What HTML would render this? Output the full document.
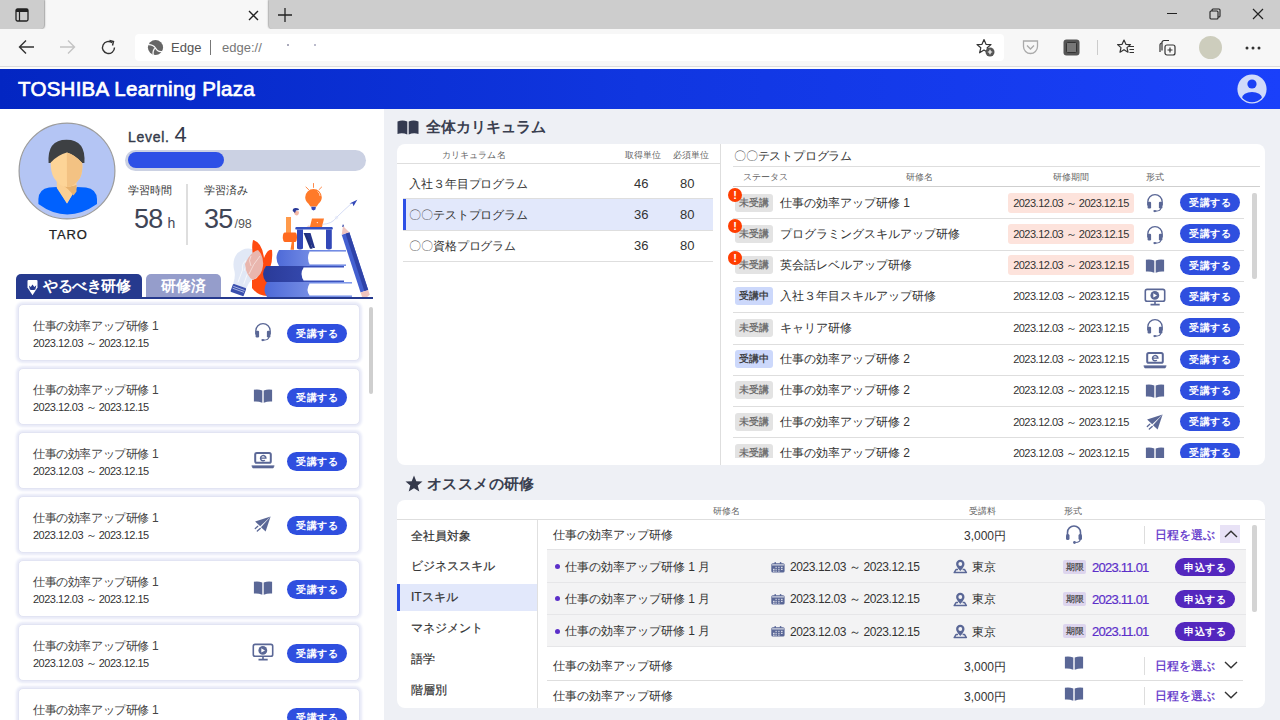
<!DOCTYPE html>
<html><head><meta charset="utf-8">
<style>
*{box-sizing:border-box;margin:0;padding:0}
html,body{width:1280px;height:720px;overflow:hidden;background:#eef0f5;font-family:"Liberation Sans",sans-serif;color:#333}
.a{position:absolute}
svg{display:block}
/* chrome */
#tabbar{left:0;top:0;width:1280px;height:30px;background:#f7f7f7}
#tabL{left:0;top:0;width:44px;height:29px;background:#cdcdcd;border-radius:0 0 4px 0;box-shadow:0.5px 0 1.5px rgba(0,0,0,0.35)}
#tabR{left:269px;top:0;width:1011px;height:29px;background:#cdcdcd;border-radius:0 0 0 4px;box-shadow:-0.5px 0 1.5px rgba(0,0,0,0.3)}
#toolbar{left:0;top:29px;width:1280px;height:38px;background:#f7f7f7;border-bottom:1px solid #dcdcdc}
#addr{left:135px;top:34px;width:869px;height:27px;background:#fff;border-radius:4px}
#hdrwhite{left:0;top:67px;width:1280px;height:2px;background:#fbfbfb}
#header{left:0;top:69px;width:1280px;height:40px;background:linear-gradient(90deg,#0326c2 0%,#1036e0 50%,#1a40fa 100%)}
#brand{left:18px;top:77px;font-size:20.5px;font-weight:normal;-webkit-text-stroke:0.7px #fff;color:#fff;letter-spacing:0.27px;white-space:nowrap}
#hline{left:0;top:108px;width:1280px;height:2px;background:#fff}
/* left */
#left{left:0;top:109px;width:384px;height:611px;background:#fff}

.lbl{font-size:11px;color:#333;white-space:nowrap}
.card{position:absolute;left:18px;width:342px;height:57px;background:#fff;border:1px solid #e2e4f3;border-radius:5px;box-shadow:0 0 2.5px 1.5px #e8eaf8}
.card .t{position:absolute;left:14px;top:13px;font-size:12px;color:#444;white-space:nowrap;letter-spacing:-0.4px}
.card .d{position:absolute;left:14px;top:31px;font-size:11px;color:#333;white-space:nowrap;letter-spacing:-0.5px}
.card .ic{position:absolute;left:231.6px;top:16.5px}
.btn{position:absolute;width:60px;height:19px;border-radius:10px;background:#2f4fdf;color:#fff;font-size:10px;font-weight:bold;text-align:center;line-height:20px;white-space:nowrap;letter-spacing:0.5px}
.card .btn{left:268px;top:18.7px}

.sec{font-size:15px;font-weight:bold;color:#3a3f50;letter-spacing:0px;white-space:nowrap}
.panel{position:absolute;background:#fff;border-radius:8px}
.th{position:absolute;font-size:9px;color:#666;white-space:nowrap;letter-spacing:0.1px}
.hl{position:absolute;height:1px;background:#dedede}
.ct{position:absolute;font-size:12px;color:#333;white-space:nowrap;letter-spacing:-0.1px}
.num{position:absolute;font-size:13px;color:#333;white-space:nowrap}
.st{position:absolute;width:38px;height:18px;border-radius:3px;font-size:9.8px;line-height:18.5px;text-align:center;white-space:nowrap;-webkit-text-stroke:0.25px currentColor}
.st.n{background:#e3e3e3;color:#666}
.st.y{background:#ccd8fb;color:#333}
.ex{position:absolute;width:14px;height:14px;border-radius:50%;background:#ff3d00;color:#fff;font-size:11px;font-weight:bold;text-align:center;line-height:14px}
.tn{position:absolute;font-size:12px;color:#333;white-space:nowrap;letter-spacing:0px}
.dp{position:absolute;width:126px;height:20px;border-radius:3px;font-size:11px;line-height:20px;text-align:center;color:#333;white-space:nowrap;letter-spacing:-0.5px}
.dp.r{background:#fde3dc}
.cat{position:absolute;left:411px;font-size:12px;color:#333;white-space:nowrap;letter-spacing:0px;-webkit-text-stroke:0.2px #333}
.rn{position:absolute;font-size:12px;color:#333;white-space:nowrap;letter-spacing:0px}
.sub{position:absolute;left:547px;width:699px;height:33px;background:#f3f3f4;border-bottom:1px solid #e4e4e6}
.pur{color:#5b2fc9}
.ap{position:absolute;width:60px;height:18.5px;border-radius:9.5px;background:#5427be;color:#fff;font-size:10.3px;font-weight:bold;text-align:center;line-height:19px;white-space:nowrap;letter-spacing:0.5px}
</style></head><body>
<div class="a" id="tabbar"></div>
<div class="a" id="tabL"></div><div class="a" id="tabR"></div>
<div class="a" id="toolbar"></div>
<div class="a" id="addr"></div>
<div class="a" id="hdrwhite"></div>
<div class="a" id="header"></div>
<div class="a" id="brand">TOSHIBA Learning Plaza</div>

<!-- tab icons -->
<svg class="a" style="left:15px;top:8px" width="14" height="14" viewBox="0 0 14 14"><rect x="1" y="1" width="12" height="12" rx="1.5" fill="none" stroke="#222" stroke-width="1.3"/><rect x="1" y="1" width="12" height="3" fill="#222"/><line x1="4.5" y1="4" x2="4.5" y2="13" stroke="#222" stroke-width="1.2"/></svg>
<svg class="a" style="left:248px;top:10px" width="11" height="11" viewBox="0 0 11 11"><path d="M1 1L10 10M10 1L1 10" stroke="#222" stroke-width="1.4"/></svg>
<svg class="a" style="left:278px;top:8px" width="14" height="14" viewBox="0 0 14 14"><path d="M7 0V14M0 7H14" stroke="#222" stroke-width="1.3"/></svg>
<!-- nav -->
<svg class="a" style="left:18px;top:39px" width="17" height="16" viewBox="0 0 17 16"><path d="M16 8H2M8 1.5L1.5 8L8 14.5" fill="none" stroke="#333" stroke-width="1.4"/></svg>
<svg class="a" style="left:59px;top:39px" width="17" height="16" viewBox="0 0 17 16"><path d="M1 8H15M9 1.5L15.5 8L9 14.5" fill="none" stroke="#c4c4c4" stroke-width="1.4"/></svg>
<svg class="a" style="left:100px;top:39px" width="17" height="17" viewBox="0 0 17 17"><path d="M14.5 8.5A6 6 0 1 1 12.2 3.8" fill="none" stroke="#333" stroke-width="1.4"/><path d="M9.5 1.5L13.5 2.5L12.5 6.5" fill="none" stroke="#333" stroke-width="1.4"/></svg>
<svg class="a" style="left:147px;top:39px" width="17" height="17" viewBox="0 0 17 17"><circle cx="8.5" cy="8.5" r="7.6" fill="#666"/><path d="M8.5 9Q6 5.3 1 5.6M8.5 9Q5.2 11 6.3 16.8M8.5 9Q11 13.8 16 12.3" fill="none" stroke="#f9f9f9" stroke-width="1.3"/></svg>
<div class="a" style="left:171px;top:40px;font-size:13px;color:#555">Edge</div>
<div class="a" style="left:210px;top:40px;width:1px;height:15px;background:#777"></div>
<div class="a" style="left:222px;top:40px;font-size:13px;color:#777">edge://</div>
<div class="a" style="left:287px;top:44px;width:2px;height:2px;background:#aab"></div>
<div class="a" style="left:314px;top:44px;width:2px;height:2px;background:#bbc"></div>
<!-- right toolbar icons -->
<svg class="a" style="left:976px;top:38px" width="19" height="19" viewBox="0 0 19 19"><path d="M8 1.5L10 6.3L15 6.6L11.2 9.8L12.4 14.8L8 12L3.6 14.8L4.8 9.8L1 6.6L6 6.3Z" fill="none" stroke="#333" stroke-width="1.2" stroke-linejoin="round"/><circle cx="14" cy="14" r="4.5" fill="#555"/><path d="M14 11.8V16.2M11.8 14H16.2" stroke="#fff" stroke-width="1.2"/></svg>
<svg class="a" style="left:1022px;top:39px" width="17" height="16" viewBox="0 0 17 16"><path d="M1.5 2H15.5V7.5A7 7 0 0 1 1.5 7.5Z" fill="none" stroke="#aaa" stroke-width="1.3"/><path d="M5 6.5L8.5 10L12 6.5" fill="none" stroke="#aaa" stroke-width="1.3"/></svg>
<svg class="a" style="left:1063px;top:39px" width="17" height="17" viewBox="0 0 17 17"><rect x="0.5" y="0.5" width="16" height="16" rx="3" fill="#555"/><rect x="3.5" y="3.5" width="10" height="10" rx="1" fill="#777" stroke="#333" stroke-width="1"/></svg>
<div class="a" style="left:1097px;top:40px;width:1px;height:15px;background:#ccc"></div>
<svg class="a" style="left:1117px;top:38px" width="18" height="18" viewBox="0 0 18 18"><path d="M7 2L8.9 6.3L13.5 6.6L10 9.6L11 14.2L7 11.7L3 14.2L4 9.6L0.6 6.6L5.1 6.3Z" fill="none" stroke="#333" stroke-width="1.2" stroke-linejoin="round"/><path d="M11.5 8.5H17M12.5 11.5H17M12.5 14.5H17" stroke="#333" stroke-width="1.2"/></svg>
<svg class="a" style="left:1159px;top:39px" width="17" height="17" viewBox="0 0 17 17"><path d="M3 11.5V3.5A2 2 0 0 1 5 1.5H10" fill="none" stroke="#333" stroke-width="1.2"/><path d="M1 13V6A2 2 0 0 1 3 4" fill="none" stroke="#333" stroke-width="1.2"/><rect x="6" y="6" width="10" height="10" rx="2" fill="none" stroke="#333" stroke-width="1.2"/><path d="M11 8.5V13.5M8.5 11H13.5" stroke="#333" stroke-width="1.2"/></svg>
<div class="a" style="left:1199px;top:36px;width:23px;height:23px;border-radius:50%;background:#cdcdbd"></div>
<svg class="a" style="left:1245px;top:46px" width="16" height="4" viewBox="0 0 16 4"><circle cx="2" cy="2" r="1.5" fill="#333"/><circle cx="8" cy="2" r="1.5" fill="#333"/><circle cx="14" cy="2" r="1.5" fill="#333"/></svg>
<!-- window controls -->
<div class="a" style="left:1167px;top:13px;width:10px;height:1px;background:#222"></div>
<svg class="a" style="left:1209px;top:8px" width="12" height="12" viewBox="0 0 12 12"><rect x="1" y="3" width="8" height="8" rx="1" fill="none" stroke="#222" stroke-width="1.1"/><path d="M3 3V2A1 1 0 0 1 4 1H10A1 1 0 0 1 11 2V8A1 1 0 0 1 10 9H9" fill="none" stroke="#222" stroke-width="1.1"/></svg>
<svg class="a" style="left:1252px;top:8px" width="12" height="12" viewBox="0 0 12 12"><path d="M1 1L11 11M11 1L1 11" stroke="#222" stroke-width="1.2"/></svg>
<!-- header user icon -->
<svg class="a" style="left:1237px;top:74px" width="30" height="30" viewBox="0 0 30 30"><defs><clipPath id="uc"><circle cx="15" cy="15" r="13.2"/></clipPath></defs><circle cx="15" cy="15" r="14.6" fill="#d0dafa"/><circle cx="15" cy="10" r="4.6" fill="#1a40f5"/><ellipse cx="15" cy="24" rx="10" ry="6" fill="#1a40f5" clip-path="url(#uc)"/></svg>
<div class="a" id="left"></div>
<!-- avatar -->
<svg class="a" style="left:18px;top:122px" width="98" height="98" viewBox="0 0 98 98"><defs><clipPath id="av"><circle cx="49" cy="49" r="47.3"/></clipPath></defs>
<circle cx="49" cy="49" r="47.9" fill="#b4c5f4" stroke="#9c9c9c" stroke-width="1.2"/>
<g clip-path="url(#av)">
<path d="M20.4 82V77Q21 67 31 65.5L38.8 65L49 81.4L58.5 65L68 65.5Q78.5 67 79 77V82Q49 103 20.4 82Z" fill="#0061fe"/>
<path d="M38.8 57H58.5V66L49 81.4L38.8 66Z" fill="#fbd093"/>
<path d="M43 62Q51 66 58.5 63V69.5L55.5 73.5Q50 66 43 62Z" fill="#e8b26e"/>
<path d="M30.6 41Q29 17.7 48.5 17.7Q68 17.7 66.4 41Z" fill="#3d4043"/>
<path d="M32.7 40.5Q40 33 48.8 30.6Q57 33 64.2 41Q65 50 62 56Q56 65 49 65Q42 65 36 56Q32.5 50 32.7 40.5Z" fill="#fdd497"/>
<path d="M48.8 30.6Q57 33 64.2 41Q65 50 62 56Q56 65 49 65Z" fill="#f3c283"/>
</g></svg>
<div class="a" style="left:49px;top:227px;font-size:13px;color:#222;letter-spacing:0.9px;-webkit-text-stroke:0.25px #222">TARO</div>
<div class="a" style="left:128px;top:123px;font-size:14px;color:#343a4a;white-space:nowrap;-webkit-text-stroke:0.4px #343a4a;line-height:24px;letter-spacing:0.7px">Level.<span style="font-size:22px;-webkit-text-stroke:0;margin-left:5px">4</span></div>
<div class="a" style="left:125px;top:150px;width:241px;height:21px;border-radius:11px;background:#cbd1e3"></div>
<div class="a" style="left:128px;top:152px;width:96px;height:16px;border-radius:8px;background:#2d50e6"></div>
<div class="a lbl" style="left:128px;top:183px">学習時間</div>
<div class="a lbl" style="left:204px;top:183px">学習済み</div>
<div class="a" style="left:186px;top:184px;width:1.5px;height:61px;background:#dedede"></div>
<div class="a" style="left:134px;top:203px;font-size:27px;color:#3f4556;white-space:nowrap;letter-spacing:-0.8px;line-height:32px">58<span style="font-size:14px;margin-left:5px;letter-spacing:0">h</span></div>
<div class="a" style="left:204px;top:203px;font-size:27px;color:#3f4556;white-space:nowrap;letter-spacing:-0.8px;line-height:32px">35<span style="font-size:12.5px;color:#555;margin-left:2px;letter-spacing:0">/98</span></div>
<!-- illustration -->
<svg class="a" style="left:220px;top:180px" width="160" height="120" viewBox="0 0 160 120">
<defs>
<linearGradient id="bk1" x1="0" x2="1"><stop offset="0" stop-color="#4e6ad8"/><stop offset="1" stop-color="#97acf0"/></linearGradient>
<linearGradient id="bk2" x1="0" x2="1"><stop offset="0" stop-color="#2a3a98"/><stop offset="1" stop-color="#3d55c0"/></linearGradient>
</defs>
<!-- pale bulb -->
<g transform="translate(3 1.5) rotate(20 25 82)">
<path d="M25 67A14.5 14.5 0 0 1 39.5 81.5Q39.5 88 35 94Q32 99 32 106H18Q18 99 15 94Q10.5 88 10.5 81.5A14.5 14.5 0 0 1 25 67Z" fill="#e1e8f6"/>
<rect x="18" y="106" width="14" height="8.5" rx="1" fill="#3a4fae"/>
<path d="M19 108.5H31M19 110.5H31" stroke="#c9d3f2" stroke-width="0.7"/>
<path d="M22 103V90Q19 84 22 80Q25 84 24 90M28 103V90Q31 84 28 80Q25 84 26 90" fill="none" stroke="#fff" stroke-width="0.6"/>
</g>
<!-- orange leaves -->
<path d="M33 60Q42 62 44 78Q48 68 52 70Q53 80 50 88Q56 86 58 90Q52 98 46 100Q40 104 34 102Q40 96 38 86Q30 74 33 60Z" fill="#ff4a10"/>
<path d="M32 100Q40 96 47 100Q50 108 47 116Q38 116 32 108Z" fill="#ff4a10"/>
<path d="M25 84Q30 72 38 70Q44 76 43 86Q42 96 33 100Q26 96 25 84Z" fill="#e9b6ae"/>
<path d="M29 94Q33 84 40 76M31 86Q28 80 31 76" fill="none" stroke="#fff" stroke-width="0.6" opacity="0.8"/>
<!-- books -->
<path d="M59 70H126V86H59Q54 78 59 70Z" fill="url(#bk1)"/>
<path d="M90 71H126V85H90Q86 78 90 71Z" fill="#fff"/>
<path d="M90 71H126M90 85H126" stroke="#5a76dc" stroke-width="1"/>
<path d="M46 86H124V102H46Q40 94 46 86Z" fill="url(#bk2)"/>
<path d="M84 87H124V101H84Q79 94 84 87Z" fill="#fff"/>
<path d="M84 87H124M84 101H124" stroke="#3d55c0" stroke-width="1"/>
<path d="M47 102H132V117H47Q42 110 47 102Z" fill="url(#bk1)"/>
<path d="M90 103H132V116H90Q85 110 90 103Z" fill="#fff"/>
<path d="M90 103H132M90 116H132" stroke="#6f8ae6" stroke-width="1"/>
<!-- pencil -->
<path d="M121.7 54.85L129.3 52.35L148.2 110L140.6 112.5Z" fill="#4460d0"/>
<path d="M125.5 53.6L129.3 52.35L148.2 110L144.4 111.25Z" fill="#2f43a8"/>
<path d="M121.7 54.85L129.3 52.35L123 46Z" fill="#f0c4be"/>
<path d="M122 47L124.2 46.3L123 44Z" fill="#2f43a8"/>
<path d="M140.6 112.5L148.2 110L149.8 114.75Q146 119 142.2 117.25Z" fill="#f0c4be"/>
<!-- desk -->
<path d="M83.6 53L88 53L92.5 68.8H90Z" fill="#1f2f7a"/>
<path d="M86 53L90.5 53L95 68H92.5Z" fill="#24348a"/>
<rect x="75.3" y="47" width="37.5" height="2.6" rx="1.2" fill="#3450c0"/>
<path d="M77 49.6H83V68.5Q80 70.5 77 68.5Z" fill="#3248b8"/>
<path d="M106 49.6H111.8V68.5Q109 70.5 106 68.5Z" fill="#3248b8"/>
<!-- chair/person -->
<rect x="66" y="37" width="5" height="16" fill="#ff9a4a"/>
<path d="M65 52.6H75Q77 52.6 77 57.3Q77 62 75 62H65Q62.8 62 62.8 57.3Q62.8 52.6 65 52.6Z" fill="#ff6a1f"/>
<path d="M71.7 62H74V69.8H70.5Z" fill="#ff7a2a"/>
<path d="M74 30.5Q74 35.4 76.5 35.4Q79 35.4 79 31.5Z" fill="#f4b9a6"/>
<path d="M72.7 31Q72.5 27.8 76 28Q79 28 79 30L76 30.5L75 33Z" fill="#2a3a98"/>
<path d="M86.5 46.5L89 45.5L91 46.8Z" fill="#f4b9a6"/>
<!-- laptop -->
<path d="M92 38.5H104L102 46.9H89.9Z" fill="#ff7a2a"/>
<circle cx="97.3" cy="42.6" r="0.6" fill="#fff"/>
<!-- bulb -->
<path d="M93.5 9A8.3 8.3 0 0 1 101.8 17.3Q101.8 21 98.5 23.8L96.7 26.5H90.4L88.5 23.8Q85.2 21 85.2 17.3A8.3 8.3 0 0 1 93.5 9Z" fill="#ff7a2a"/>
<path d="M97.5 11.5Q100 13 100 16" fill="none" stroke="#fff" stroke-width="0.8" opacity="0.8"/>
<path d="M91.2 26.8H95.9L95.4 29.6Q93.5 31.2 91.7 29.6Z" fill="#3248b8"/>
<path d="M93.5 3.1V7.8M85.7 6.8L88.9 9.9M101.9 6.8L98.75 9.9" stroke="#ff8a4a" stroke-width="1"/>
<!-- arrow -->
<path d="M102.4 44.3Q112 44 116.5 37.5Q124 30 132 23" fill="none" stroke="#c9d3f2" stroke-width="0.8"/>
<circle cx="116.5" cy="37.6" r="1.2" fill="none" stroke="#d8def5" stroke-width="0.6"/>
<path d="M129.5 23.5L137.3 19.8L133.5 26.2L132.6 23.6Z" fill="#3248b8"/>
</svg>
<!-- tabs -->
<div class="a" style="left:16px;top:274px;width:126px;height:25px;background:#263a8e;border-radius:5px 5px 0 0"></div>
<svg class="a" style="left:27px;top:280px" width="11" height="16" viewBox="0 0 11 16"><path d="M0.5 1Q0.5 0 1.5 0H9.5Q10.5 0 10.5 1V7.5L5.5 15.3L0.5 7.5Z" fill="#fff"/><path d="M2 5.5L3.8 7L5.5 4.6L7.3 7L9.3 5.3L8.4 9.4Q5.5 10.6 2.8 9.4Z" fill="#263a8e"/></svg>
<div class="a" style="left:43px;top:277px;font-size:15px;font-weight:bold;color:#fff;white-space:nowrap;letter-spacing:-0.4px">やるべき研修</div>
<div class="a" style="left:146px;top:274px;width:75px;height:24px;background:#959dcb;border-radius:5px 5px 0 0"></div>
<div class="a" style="left:161px;top:277px;font-size:15px;font-weight:bold;color:#fff;white-space:nowrap">研修済</div>
<div class="a" style="left:16px;top:297px;width:357px;height:2px;background:#263a8e"></div>
<!-- scrollbar -->
<div class="a" style="left:369px;top:307px;width:4px;height:87px;border-radius:2px;background:#cfcfcf"></div>
<div class="card" style="top:304px"><div class="t">仕事の効率アップ研修 1</div><div class="d">2023.12.03 ～ 2023.12.15</div><div class="ic"><svg width="24" height="20" viewBox="0 0 24 20"><path d="M4.8 12.5V8.8A7.2 7.2 0 0 1 19.2 8.8V12.5" fill="none" stroke="#5a6796" stroke-width="1.3"/><rect x="4.6" y="8.7" width="3.5" height="6.7" rx="1.2" fill="#5a6796"/><rect x="15.9" y="8.7" width="3.5" height="6.7" rx="1.2" fill="#5a6796"/><path d="M17.9 15Q17.6 18 12.8 18.1" fill="none" stroke="#5a6796" stroke-width="1.1"/><ellipse cx="11.8" cy="18.1" rx="1.5" ry="1.1" fill="#5a6796"/></svg></div><div class="btn">受講する</div></div>
<div class="card" style="top:368px"><div class="t">仕事の効率アップ研修 1</div><div class="d">2023.12.03 ～ 2023.12.15</div><div class="ic"><svg width="24" height="20" viewBox="0 0 24 20"><path d="M2.9 3.8Q7 2.9 11.3 4.5V16.7Q7 15.1 2.9 15.6Z" fill="#5a6796"/><path d="M21.1 3.8Q17 2.9 12.7 4.5V16.7Q17 15.1 21.1 15.6Z" fill="#5a6796"/></svg></div><div class="btn">受講する</div></div>
<div class="card" style="top:432px"><div class="t">仕事の効率アップ研修 1</div><div class="d">2023.12.03 ～ 2023.12.15</div><div class="ic"><svg width="24" height="20" viewBox="0 0 24 20"><rect x="4.2" y="3" width="15.6" height="9.75" rx="1.6" fill="none" stroke="#5a6796" stroke-width="2"/><path d="M9.6 8.1H14.9A2.7 2.6 0 1 0 13.9 10.2" fill="none" stroke="#5a6796" stroke-width="1.4"/><path d="M0.8 15.7H23.2L22.2 18H1.8Z" fill="#5a6796" stroke="#5a6796" stroke-width="0.6" stroke-linejoin="round"/></svg></div><div class="btn">受講する</div></div>
<div class="card" style="top:496px"><div class="t">仕事の効率アップ研修 1</div><div class="d">2023.12.03 ～ 2023.12.15</div><div class="ic"><svg width="24" height="20" viewBox="0 0 24 20"><path d="M19.6 2.6L4.1 7.6L9.2 12.3Z" fill="#5a6796"/><path d="M19.6 2.6L10 13.2L14.6 17.4Z" fill="#5a6796"/><path d="M4.3 14.5L6.8 12.2M6.3 17L9.2 14.4" stroke="#5a6796" stroke-width="1.3" stroke-linecap="round"/></svg></div><div class="btn">受講する</div></div>
<div class="card" style="top:560px"><div class="t">仕事の効率アップ研修 1</div><div class="d">2023.12.03 ～ 2023.12.15</div><div class="ic"><svg width="24" height="20" viewBox="0 0 24 20"><path d="M2.9 3.8Q7 2.9 11.3 4.5V16.7Q7 15.1 2.9 15.6Z" fill="#5a6796"/><path d="M21.1 3.8Q17 2.9 12.7 4.5V16.7Q17 15.1 21.1 15.6Z" fill="#5a6796"/></svg></div><div class="btn">受講する</div></div>
<div class="card" style="top:624px"><div class="t">仕事の効率アップ研修 1</div><div class="d">2023.12.03 ～ 2023.12.15</div><div class="ic"><svg width="24" height="20" viewBox="0 0 24 20"><rect x="2.3" y="2.4" width="19.4" height="11.9" rx="1.8" fill="none" stroke="#5a6796" stroke-width="1.6"/><circle cx="11.8" cy="8.4" r="4.4" fill="#5a6796"/><path d="M10.3 6.2L14 8.4L10.3 10.6Z" fill="#fff"/><path d="M12 14.3V17.4M7.5 17.6H16.7" stroke="#5a6796" stroke-width="1.6"/></svg></div><div class="btn">受講する</div></div>
<div class="card" style="top:688px"><div class="t">仕事の効率アップ研修 1</div><div class="d">2023.12.03 ～ 2023.12.15</div><div class="btn">受講する</div></div>


<!-- curriculum section -->
<svg class="a" style="left:397px;top:120px" width="22" height="15" viewBox="0 0 22 15"><path d="M0.5 1.5Q5.5 -0.5 10.3 1.5V14.5Q5.5 12.5 0.5 14Z" fill="#343a50"/><path d="M21.5 1.5Q16.5 -0.5 11.7 1.5V14.5Q16.5 12.5 21.5 14Z" fill="#343a50"/></svg>
<div class="a sec" style="left:426px;top:118px">全体カリキュラム</div>
<div class="panel" style="left:397px;top:144px;width:868px;height:321px"></div>
<div class="th" style="left:442px;top:149px">カリキュラム名</div>
<div class="th" style="left:625px;top:149px">取得単位</div>
<div class="th" style="left:673px;top:149px">必須単位</div>
<div class="hl" style="left:397px;top:163px;width:324px"></div>
<div class="a" style="left:720px;top:144px;width:1px;height:321px;background:#dedede"></div>
<div class="ct" style="left:409px;top:176px">入社３年目プログラム</div>
<div class="num" style="left:634px;top:176px">46</div><div class="num" style="left:680px;top:176px">80</div>
<div class="hl" style="left:403px;top:198px;width:310px"></div>
<div class="a" style="left:403px;top:199px;width:310px;height:31px;background:#e2e8fb"></div>
<div class="a" style="left:403px;top:199px;width:3px;height:31px;background:#2d50e6"></div>
<div class="ct" style="left:409px;top:207px">〇〇テストプログラム</div>
<div class="num" style="left:634px;top:207px">36</div><div class="num" style="left:680px;top:207px">80</div>
<div class="hl" style="left:403px;top:230px;width:310px"></div>
<div class="ct" style="left:409px;top:238px">〇〇資格プログラム</div>
<div class="num" style="left:634px;top:238px">36</div><div class="num" style="left:680px;top:238px">80</div>
<div class="hl" style="left:403px;top:261px;width:310px"></div>
<!-- detail -->
<div class="ct" style="left:734px;top:148px;font-size:12px;letter-spacing:-0.2px">〇〇テストプログラム</div>
<div class="hl" style="left:733px;top:166px;width:527px"></div>
<div class="th" style="left:743px;top:171px">ステータス</div>
<div class="th" style="left:906px;top:171px">研修名</div>
<div class="th" style="left:1053px;top:171px">研修期間</div>
<div class="th" style="left:1146px;top:171px">形式</div>
<div class="hl" style="left:733px;top:186px;width:527px;background:#cfcfcf"></div>
<div class="a" style="left:1252px;top:193px;width:5px;height:86px;border-radius:2px;background:#d4d4d4"></div>
<div class="a" style="left:721px;top:187px;width:540px;height:271px;overflow:hidden"><div style="position:absolute;left:-721px;top:-187px;width:1280px;height:720px"><div class="st n" style="left:735px;top:193.5px">未受講</div><div class="ex" style="left:728px;top:188.0px">!</div><div class="tn" style="left:780px;top:194.5px">仕事の効率アップ研修 1</div><div class="dp r" style="left:1008px;top:192.5px">2023.12.03 ～ 2023.12.15</div><div class="a" style="left:1143.3px;top:193.2px"><svg width="24" height="20" viewBox="0 0 24 20"><path d="M4.8 12.5V8.8A7.2 7.2 0 0 1 19.2 8.8V12.5" fill="none" stroke="#5a6796" stroke-width="1.3"/><rect x="4.6" y="8.7" width="3.5" height="6.7" rx="1.2" fill="#5a6796"/><rect x="15.9" y="8.7" width="3.5" height="6.7" rx="1.2" fill="#5a6796"/><path d="M17.9 15Q17.6 18 12.8 18.1" fill="none" stroke="#5a6796" stroke-width="1.1"/><ellipse cx="11.8" cy="18.1" rx="1.5" ry="1.1" fill="#5a6796"/></svg></div><div class="btn" style="left:1180px;top:193.0px">受講する</div><div class="hl" style="left:733px;top:218.3px;width:511px"></div>
<div class="st n" style="left:735px;top:224.8px">未受講</div><div class="ex" style="left:728px;top:219.3px">!</div><div class="tn" style="left:780px;top:225.8px">プログラミングスキルアップ研修</div><div class="dp r" style="left:1008px;top:223.8px">2023.12.03 ～ 2023.12.15</div><div class="a" style="left:1143.3px;top:224.5px"><svg width="24" height="20" viewBox="0 0 24 20"><path d="M4.8 12.5V8.8A7.2 7.2 0 0 1 19.2 8.8V12.5" fill="none" stroke="#5a6796" stroke-width="1.3"/><rect x="4.6" y="8.7" width="3.5" height="6.7" rx="1.2" fill="#5a6796"/><rect x="15.9" y="8.7" width="3.5" height="6.7" rx="1.2" fill="#5a6796"/><path d="M17.9 15Q17.6 18 12.8 18.1" fill="none" stroke="#5a6796" stroke-width="1.1"/><ellipse cx="11.8" cy="18.1" rx="1.5" ry="1.1" fill="#5a6796"/></svg></div><div class="btn" style="left:1180px;top:224.3px">受講する</div><div class="hl" style="left:733px;top:249.6px;width:511px"></div>
<div class="st n" style="left:735px;top:256.1px">未受講</div><div class="ex" style="left:728px;top:250.6px">!</div><div class="tn" style="left:780px;top:257.1px">英会話レベルアップ研修</div><div class="dp r" style="left:1008px;top:255.1px">2023.12.03 ～ 2023.12.15</div><div class="a" style="left:1143.3px;top:255.8px"><svg width="24" height="20" viewBox="0 0 24 20"><path d="M2.9 3.8Q7 2.9 11.3 4.5V16.7Q7 15.1 2.9 15.6Z" fill="#5a6796"/><path d="M21.1 3.8Q17 2.9 12.7 4.5V16.7Q17 15.1 21.1 15.6Z" fill="#5a6796"/></svg></div><div class="btn" style="left:1180px;top:255.6px">受講する</div><div class="hl" style="left:733px;top:280.9px;width:511px"></div>
<div class="st y" style="left:735px;top:287.4px">受講中</div><div class="tn" style="left:780px;top:288.4px">入社３年目スキルアップ研修</div><div class="dp" style="left:1008px;top:286.4px">2023.12.03 ～ 2023.12.15</div><div class="a" style="left:1143.3px;top:287.1px"><svg width="24" height="20" viewBox="0 0 24 20"><rect x="2.3" y="2.4" width="19.4" height="11.9" rx="1.8" fill="none" stroke="#5a6796" stroke-width="1.6"/><circle cx="11.8" cy="8.4" r="4.4" fill="#5a6796"/><path d="M10.3 6.2L14 8.4L10.3 10.6Z" fill="#fff"/><path d="M12 14.3V17.4M7.5 17.6H16.7" stroke="#5a6796" stroke-width="1.6"/></svg></div><div class="btn" style="left:1180px;top:286.9px">受講する</div><div class="hl" style="left:733px;top:312.2px;width:511px"></div>
<div class="st n" style="left:735px;top:318.7px">未受講</div><div class="tn" style="left:780px;top:319.7px">キャリア研修</div><div class="dp" style="left:1008px;top:317.7px">2023.12.03 ～ 2023.12.15</div><div class="a" style="left:1143.3px;top:318.4px"><svg width="24" height="20" viewBox="0 0 24 20"><path d="M4.8 12.5V8.8A7.2 7.2 0 0 1 19.2 8.8V12.5" fill="none" stroke="#5a6796" stroke-width="1.3"/><rect x="4.6" y="8.7" width="3.5" height="6.7" rx="1.2" fill="#5a6796"/><rect x="15.9" y="8.7" width="3.5" height="6.7" rx="1.2" fill="#5a6796"/><path d="M17.9 15Q17.6 18 12.8 18.1" fill="none" stroke="#5a6796" stroke-width="1.1"/><ellipse cx="11.8" cy="18.1" rx="1.5" ry="1.1" fill="#5a6796"/></svg></div><div class="btn" style="left:1180px;top:318.2px">受講する</div><div class="hl" style="left:733px;top:343.5px;width:511px"></div>
<div class="st y" style="left:735px;top:350.0px">受講中</div><div class="tn" style="left:780px;top:351.0px">仕事の効率アップ研修 2</div><div class="dp" style="left:1008px;top:349.0px">2023.12.03 ～ 2023.12.15</div><div class="a" style="left:1143.3px;top:349.7px"><svg width="24" height="20" viewBox="0 0 24 20"><rect x="4.2" y="3" width="15.6" height="9.75" rx="1.6" fill="none" stroke="#5a6796" stroke-width="2"/><path d="M9.6 8.1H14.9A2.7 2.6 0 1 0 13.9 10.2" fill="none" stroke="#5a6796" stroke-width="1.4"/><path d="M0.8 15.7H23.2L22.2 18H1.8Z" fill="#5a6796" stroke="#5a6796" stroke-width="0.6" stroke-linejoin="round"/></svg></div><div class="btn" style="left:1180px;top:349.5px">受講する</div><div class="hl" style="left:733px;top:374.8px;width:511px"></div>
<div class="st n" style="left:735px;top:381.3px">未受講</div><div class="tn" style="left:780px;top:382.3px">仕事の効率アップ研修 2</div><div class="dp" style="left:1008px;top:380.3px">2023.12.03 ～ 2023.12.15</div><div class="a" style="left:1143.3px;top:381.0px"><svg width="24" height="20" viewBox="0 0 24 20"><path d="M2.9 3.8Q7 2.9 11.3 4.5V16.7Q7 15.1 2.9 15.6Z" fill="#5a6796"/><path d="M21.1 3.8Q17 2.9 12.7 4.5V16.7Q17 15.1 21.1 15.6Z" fill="#5a6796"/></svg></div><div class="btn" style="left:1180px;top:380.8px">受講する</div><div class="hl" style="left:733px;top:406.1px;width:511px"></div>
<div class="st n" style="left:735px;top:412.6px">未受講</div><div class="tn" style="left:780px;top:413.6px">仕事の効率アップ研修 2</div><div class="dp" style="left:1008px;top:411.6px">2023.12.03 ～ 2023.12.15</div><div class="a" style="left:1143.3px;top:412.3px"><svg width="24" height="20" viewBox="0 0 24 20"><path d="M19.6 2.6L4.1 7.6L9.2 12.3Z" fill="#5a6796"/><path d="M19.6 2.6L10 13.2L14.6 17.4Z" fill="#5a6796"/><path d="M4.3 14.5L6.8 12.2M6.3 17L9.2 14.4" stroke="#5a6796" stroke-width="1.3" stroke-linecap="round"/></svg></div><div class="btn" style="left:1180px;top:412.1px">受講する</div><div class="hl" style="left:733px;top:437.4px;width:511px"></div>
<div class="st n" style="left:735px;top:443.9px">未受講</div><div class="tn" style="left:780px;top:444.9px">仕事の効率アップ研修 2</div><div class="dp" style="left:1008px;top:442.9px">2023.12.03 ～ 2023.12.15</div><div class="a" style="left:1143.3px;top:443.6px"><svg width="24" height="20" viewBox="0 0 24 20"><path d="M2.9 3.8Q7 2.9 11.3 4.5V16.7Q7 15.1 2.9 15.6Z" fill="#5a6796"/><path d="M21.1 3.8Q17 2.9 12.7 4.5V16.7Q17 15.1 21.1 15.6Z" fill="#5a6796"/></svg></div><div class="btn" style="left:1180px;top:443.4px">受講する</div><div class="hl" style="left:733px;top:468.7px;width:511px"></div>
</div></div>
<svg class="a" style="left:405px;top:475px" width="18" height="18" viewBox="0 0 18 18"><path d="M9 0.5L11.3 6.3L17.5 6.6L12.7 10.5L14.3 16.6L9 13.2L3.7 16.6L5.3 10.5L0.5 6.6L6.7 6.3Z" fill="#33384a"/></svg>
<div class="a sec" style="left:427px;top:475px;letter-spacing:0.4px">オススメの研修</div>
<div class="panel" style="left:397px;top:500px;width:868px;height:208px;overflow:hidden">
</div>
<div class="th" style="left:713px;top:505px">研修名</div>
<div class="th" style="left:969px;top:505px">受講料</div>
<div class="th" style="left:1064px;top:505px">形式</div>
<div class="hl" style="left:397px;top:519px;width:868px"></div>
<div class="a" style="left:537px;top:520px;width:1px;height:188px;background:#e0e0e0"></div>
<div class="a" style="left:397px;top:584px;width:140px;height:27px;background:#e2e8fb"></div>
<div class="a" style="left:397px;top:584px;width:3px;height:27px;background:#2d50e6"></div>
<div class="cat" style="top:528px">全社員対象</div>
<div class="cat" style="top:558px">ビジネススキル</div>
<div class="cat" style="top:589px">ITスキル</div>
<div class="cat" style="top:620px">マネジメント</div>
<div class="cat" style="top:651px">語学</div>
<div class="cat" style="top:682px">階層別</div>
<div class="a" style="left:1252px;top:525px;width:5px;height:87px;border-radius:2px;background:#d4d4d4"></div>
<div class="rn" style="left:553px;top:527.0px">仕事の効率アップ研修</div><div class="num" style="left:964px;top:527.5px;font-size:12px">3,000円</div><div class="a" style="left:1065px;top:524px"><svg width="18" height="20" viewBox="0 0 18 20"><path d="M2.5 11V8.5A6.5 6.5 0 0 1 15.5 8.5V11" fill="none" stroke="#5a6796" stroke-width="1.6"/><rect x="1" y="10" width="3.5" height="6" rx="1.5" fill="#5a6796"/><rect x="13.5" y="10" width="3.5" height="6" rx="1.5" fill="#5a6796"/><path d="M15.2 15.5Q15 18.3 10.5 18.5" fill="none" stroke="#5a6796" stroke-width="1.2"/><circle cx="9.5" cy="18.5" r="1.4" fill="#5a6796"/></svg></div><div class="a" style="left:1144px;top:526.0px;width:1px;height:18px;background:#ddd"></div><div class="rn pur" style="left:1155px;top:527.0px;font-size:12px;letter-spacing:-0.1px;-webkit-text-stroke:0.25px #5b2fc9">日程を選ぶ</div><div class="a" style="left:1220px;top:525.2px;width:20px;height:18px;background:#e8e2f6"></div><svg class="a" style="left:1223.5px;top:530.2px" width="14" height="8" viewBox="0 0 14 8"><path d="M1 7L7 1.2L13 7" fill="none" stroke="#333" stroke-width="1.4"/></svg><div class="a" style="left:547px;top:550px;width:699px;height:97px;background:#f3f3f4"></div><div class="hl" style="left:547px;top:582px;width:699px;background:#e6e6e8"></div><div class="hl" style="left:547px;top:614px;width:699px;background:#e6e6e8"></div><div class="hl" style="left:547px;top:646px;width:699px;background:#e6e6e8"></div><div class="a" style="left:555px;top:564.0px;width:5px;height:5px;border-radius:50%;background:#5b2fc9"></div><div class="rn" style="left:565px;top:558.5px">仕事の効率アップ研修 1 月</div><div class="a" style="left:771px;top:561.5px"><svg width="14" height="11" viewBox="0 0 14 11"><rect x="0.3" y="1.2" width="13.3" height="9.3" rx="1.6" fill="#5a6796"/><rect x="3.4" y="0" width="1.6" height="2.6" rx="0.8" fill="#5a6796"/><rect x="8.8" y="0" width="1.6" height="2.6" rx="0.8" fill="#5a6796"/><rect x="1.1" y="2.4" width="11.8" height="1" fill="#fff" opacity="0.9"/><g fill="#fff" opacity="0.85"><rect x="4.5" y="4.8" width="1.2" height="1.1"/><rect x="7.3" y="4.8" width="1.2" height="1.1"/><rect x="10" y="4.8" width="1.6" height="1.1"/><rect x="2" y="6.8" width="1.6" height="1.1"/><rect x="4.5" y="6.8" width="1.2" height="1.1"/><rect x="7.3" y="6.8" width="1.2" height="1.1"/><rect x="10" y="6.8" width="1.6" height="1.1"/><rect x="2" y="8.6" width="1.6" height="1.1"/><rect x="4.5" y="8.6" width="1.2" height="1.1"/><rect x="7.3" y="8.6" width="1.2" height="1.1"/></g></svg></div><div class="num" style="left:790px;top:559.0px;font-size:12px;letter-spacing:-0.4px">2023.12.03 ～ 2023.12.15</div><div class="a" style="left:953px;top:559.3px"><svg width="15" height="15" viewBox="0 0 15 15"><path d="M7.3 0.8A4.2 4.2 0 0 1 11.5 5Q11.5 7.5 7.3 12Q3.1 7.5 3.1 5A4.2 4.2 0 0 1 7.3 0.8Z" fill="#5a6796"/><circle cx="7.3" cy="5" r="1.9" fill="#f3f3f4"/><path d="M5 10.6H3L1.2 13.6H13.4L11.6 10.6H9.6" fill="none" stroke="#5a6796" stroke-width="1.5" stroke-linejoin="round"/></svg></div><div class="num" style="left:972px;top:559.0px;font-size:12px">東京</div><div class="a" style="left:1063px;top:559.5px;width:23px;height:14px;border-radius:2px;background:#ddd5ee;font-size:8.5px;color:#444;text-align:center;line-height:14px;-webkit-text-stroke:0.2px #444">期限</div><div class="num pur" style="left:1092px;top:558.5px;font-size:13px;letter-spacing:-0.75px;-webkit-text-stroke:0.2px #5b2fc9;margin-top:1px">2023.11.01</div><div class="ap" style="left:1175px;top:557.5px">申込する</div><div class="a" style="left:555px;top:596.3px;width:5px;height:5px;border-radius:50%;background:#5b2fc9"></div><div class="rn" style="left:565px;top:590.8px">仕事の効率アップ研修 1 月</div><div class="a" style="left:771px;top:593.8px"><svg width="14" height="11" viewBox="0 0 14 11"><rect x="0.3" y="1.2" width="13.3" height="9.3" rx="1.6" fill="#5a6796"/><rect x="3.4" y="0" width="1.6" height="2.6" rx="0.8" fill="#5a6796"/><rect x="8.8" y="0" width="1.6" height="2.6" rx="0.8" fill="#5a6796"/><rect x="1.1" y="2.4" width="11.8" height="1" fill="#fff" opacity="0.9"/><g fill="#fff" opacity="0.85"><rect x="4.5" y="4.8" width="1.2" height="1.1"/><rect x="7.3" y="4.8" width="1.2" height="1.1"/><rect x="10" y="4.8" width="1.6" height="1.1"/><rect x="2" y="6.8" width="1.6" height="1.1"/><rect x="4.5" y="6.8" width="1.2" height="1.1"/><rect x="7.3" y="6.8" width="1.2" height="1.1"/><rect x="10" y="6.8" width="1.6" height="1.1"/><rect x="2" y="8.6" width="1.6" height="1.1"/><rect x="4.5" y="8.6" width="1.2" height="1.1"/><rect x="7.3" y="8.6" width="1.2" height="1.1"/></g></svg></div><div class="num" style="left:790px;top:591.3px;font-size:12px;letter-spacing:-0.4px">2023.12.03 ～ 2023.12.15</div><div class="a" style="left:953px;top:591.6px"><svg width="15" height="15" viewBox="0 0 15 15"><path d="M7.3 0.8A4.2 4.2 0 0 1 11.5 5Q11.5 7.5 7.3 12Q3.1 7.5 3.1 5A4.2 4.2 0 0 1 7.3 0.8Z" fill="#5a6796"/><circle cx="7.3" cy="5" r="1.9" fill="#f3f3f4"/><path d="M5 10.6H3L1.2 13.6H13.4L11.6 10.6H9.6" fill="none" stroke="#5a6796" stroke-width="1.5" stroke-linejoin="round"/></svg></div><div class="num" style="left:972px;top:591.3px;font-size:12px">東京</div><div class="a" style="left:1063px;top:591.8px;width:23px;height:14px;border-radius:2px;background:#ddd5ee;font-size:8.5px;color:#444;text-align:center;line-height:14px;-webkit-text-stroke:0.2px #444">期限</div><div class="num pur" style="left:1092px;top:590.8px;font-size:13px;letter-spacing:-0.75px;-webkit-text-stroke:0.2px #5b2fc9;margin-top:1px">2023.11.01</div><div class="ap" style="left:1175px;top:589.8px">申込する</div><div class="a" style="left:555px;top:628.6px;width:5px;height:5px;border-radius:50%;background:#5b2fc9"></div><div class="rn" style="left:565px;top:623.1px">仕事の効率アップ研修 1 月</div><div class="a" style="left:771px;top:626.1px"><svg width="14" height="11" viewBox="0 0 14 11"><rect x="0.3" y="1.2" width="13.3" height="9.3" rx="1.6" fill="#5a6796"/><rect x="3.4" y="0" width="1.6" height="2.6" rx="0.8" fill="#5a6796"/><rect x="8.8" y="0" width="1.6" height="2.6" rx="0.8" fill="#5a6796"/><rect x="1.1" y="2.4" width="11.8" height="1" fill="#fff" opacity="0.9"/><g fill="#fff" opacity="0.85"><rect x="4.5" y="4.8" width="1.2" height="1.1"/><rect x="7.3" y="4.8" width="1.2" height="1.1"/><rect x="10" y="4.8" width="1.6" height="1.1"/><rect x="2" y="6.8" width="1.6" height="1.1"/><rect x="4.5" y="6.8" width="1.2" height="1.1"/><rect x="7.3" y="6.8" width="1.2" height="1.1"/><rect x="10" y="6.8" width="1.6" height="1.1"/><rect x="2" y="8.6" width="1.6" height="1.1"/><rect x="4.5" y="8.6" width="1.2" height="1.1"/><rect x="7.3" y="8.6" width="1.2" height="1.1"/></g></svg></div><div class="num" style="left:790px;top:623.6px;font-size:12px;letter-spacing:-0.4px">2023.12.03 ～ 2023.12.15</div><div class="a" style="left:953px;top:623.9px"><svg width="15" height="15" viewBox="0 0 15 15"><path d="M7.3 0.8A4.2 4.2 0 0 1 11.5 5Q11.5 7.5 7.3 12Q3.1 7.5 3.1 5A4.2 4.2 0 0 1 7.3 0.8Z" fill="#5a6796"/><circle cx="7.3" cy="5" r="1.9" fill="#f3f3f4"/><path d="M5 10.6H3L1.2 13.6H13.4L11.6 10.6H9.6" fill="none" stroke="#5a6796" stroke-width="1.5" stroke-linejoin="round"/></svg></div><div class="num" style="left:972px;top:623.6px;font-size:12px">東京</div><div class="a" style="left:1063px;top:624.1px;width:23px;height:14px;border-radius:2px;background:#ddd5ee;font-size:8.5px;color:#444;text-align:center;line-height:14px;-webkit-text-stroke:0.2px #444">期限</div><div class="num pur" style="left:1092px;top:623.1px;font-size:13px;letter-spacing:-0.75px;-webkit-text-stroke:0.2px #5b2fc9;margin-top:1px">2023.11.01</div><div class="ap" style="left:1175px;top:622.1px">申込する</div><div class="hl" style="left:547px;top:549px;width:699px;background:#e4e4e6"></div><div class="rn" style="left:553px;top:658.0px">仕事の効率アップ研修</div><div class="num" style="left:964px;top:658.5px;font-size:12px">3,000円</div><div class="a" style="left:1062.1px;top:653.25px"><svg width="24" height="20" viewBox="0 0 24 20"><path d="M2.9 3.8Q7 2.9 11.3 4.5V16.7Q7 15.1 2.9 15.6Z" fill="#5a6796"/><path d="M21.1 3.8Q17 2.9 12.7 4.5V16.7Q17 15.1 21.1 15.6Z" fill="#5a6796"/></svg></div><div class="a" style="left:1144px;top:657.0px;width:1px;height:18px;background:#ddd"></div><div class="rn pur" style="left:1155px;top:658.0px;font-size:12px;letter-spacing:-0.1px;-webkit-text-stroke:0.25px #5b2fc9">日程を選ぶ</div><svg class="a" style="left:1223.5px;top:661px" width="14" height="8" viewBox="0 0 14 8"><path d="M1 1L7 6.8L13 1" fill="none" stroke="#333" stroke-width="1.4"/></svg><div class="hl" style="left:547px;top:680px;width:696px"></div><div class="rn" style="left:553px;top:688.0px">仕事の効率アップ研修</div><div class="num" style="left:964px;top:688.5px;font-size:12px">3,000円</div><div class="a" style="left:1062.1px;top:684.15px"><svg width="24" height="20" viewBox="0 0 24 20"><path d="M2.9 3.8Q7 2.9 11.3 4.5V16.7Q7 15.1 2.9 15.6Z" fill="#5a6796"/><path d="M21.1 3.8Q17 2.9 12.7 4.5V16.7Q17 15.1 21.1 15.6Z" fill="#5a6796"/></svg></div><div class="a" style="left:1144px;top:687.0px;width:1px;height:18px;background:#ddd"></div><div class="rn pur" style="left:1155px;top:688.0px;font-size:12px;letter-spacing:-0.1px;-webkit-text-stroke:0.25px #5b2fc9">日程を選ぶ</div><svg class="a" style="left:1223.5px;top:691px" width="14" height="8" viewBox="0 0 14 8"><path d="M1 1L7 6.8L13 1" fill="none" stroke="#333" stroke-width="1.4"/></svg></body></html>
